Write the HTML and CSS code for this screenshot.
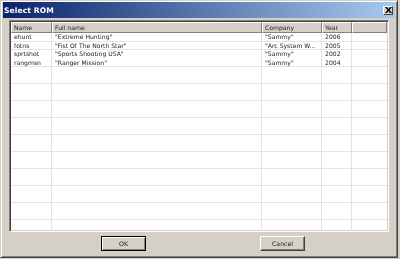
FILE: index.html
```html
<!DOCTYPE html>
<html>
<head>
<meta charset="utf-8">
<link rel="stylesheet" href="styles.css">
</head>
<body>
<div class="window">
  <div class="titlebar">
    <span class="title">Select ROM</span>
    <span class="close">
      <svg width="7" height="6" viewBox="0 0 7 6"><path d="M0 0h2l1.5 2 1.5-2h2l-2.5 3 2.5 3h-2l-1.5-2-1.5 2h-2l2.5-3z" fill="#000"/></svg>
    </span>
  </div>
  <div class="body">
    <div class="list">
      <div class="header">
        <div class="hcell c1">Name</div>
        <div class="hcell c2">Full name</div>
        <div class="hcell c3">Company</div>
        <div class="hcell c4">Year</div>
        <div class="hcell c5"></div>
      </div>
      <div class="rows">
        <div class="row"><div class="cell c1">ehunt</div><div class="cell c2">"Extreme Hunting"</div><div class="cell c3">"Sammy"</div><div class="cell c4">2006</div><div class="cell c5"></div></div>
        <div class="row"><div class="cell c1">fotns</div><div class="cell c2">"Fist Of The North Star"</div><div class="cell c3">"Arc System W...</div><div class="cell c4">2005</div><div class="cell c5"></div></div>
        <div class="row"><div class="cell c1">sprtshot</div><div class="cell c2">"Sports Shooting USA"</div><div class="cell c3">"Sammy"</div><div class="cell c4">2002</div><div class="cell c5"></div></div>
        <div class="row"><div class="cell c1">rangmsn</div><div class="cell c2">"Ranger Mission"</div><div class="cell c3">"Sammy"</div><div class="cell c4">2004</div><div class="cell c5"></div></div>
      </div>
    </div>
    <div class="buttons">
      <button class="btn default">OK</button>
      <button class="btn">Cancel</button>
    </div>
  </div>
</div>
</body>
</html>
```
FILE: styles.css
```css
html, body {
  margin: 0;
  padding: 0;
  background: #d4d0c8;
}
body {
  width: 400px;
  height: 259px;
  overflow: hidden;
  font-family: "DejaVu Sans", "Liberation Sans", sans-serif;
}
.window {
  box-sizing: border-box;
  width: 398px;
  height: 258px;
  border-top: 1px solid #d4d0c8;
  border-left: 1px solid #d4d0c8;
  border-right: 1px solid #404040;
  border-bottom: 1px solid #404040;
  box-shadow: inset 1px 1px 0 #fff, inset -1px -1px 0 #808080;
  padding: 1px 2px 2px 2px;
  display: flex;
  flex-direction: column;
  will-change: transform;
}
.titlebar {
  height: 16px;
  background: linear-gradient(to right, #0a246a, #a6caf0);
  display: flex;
  align-items: center;
  justify-content: space-between;
  padding: 0 2px 0 1px;
}
.title {
  color: #fff;
  font-weight: bold;
  font-size: 7.6px;
  letter-spacing: 0.1px;
}
.close {
  box-sizing: border-box;
  width: 10px;
  height: 9px;
  background: #d4d0c8;
  border-top: 1px solid #fff;
  border-left: 1px solid #fff;
  border-right: 1px solid #404040;
  border-bottom: 1px solid #404040;
  display: flex;
  align-items: center;
  justify-content: center;
}
.close svg { display: block; }
.body {
  flex: 1;
  display: flex;
  flex-direction: column;
  padding: 2px 7px 0 6px;
}
.list {
  box-sizing: border-box;
  width: 380px;
  height: 212px;
  background: #fff;
  border-top: 1px solid #808080;
  border-left: 1px solid #808080;
  border-right: 1px solid #fff;
  border-bottom: 1px solid #fff;
  box-shadow: inset 1px 1px 0 #404040, inset -1px -1px 0 #d4d0c8;
  padding: 1px;
  overflow: hidden;
  font-size: 6.1px;
  color: #1a1a1a;
}
.header {
  display: flex;
  height: 11px;
}
.hcell {
  box-sizing: border-box;
  height: 11px;
  background: #d4d0c8;
  border-top: 1px solid #fff;
  border-left: 1px solid #fff;
  border-right: 1px solid #808080;
  border-bottom: 1px solid #808080;
  padding-left: 2px;
  line-height: 9px;
  color: #1a1a1a;
}
.c1 { width: 41px; }
.c2 { width: 210px; }
.c3 { width: 60px; }
.c4 { width: 30px; }
.c5 { flex: 1; }
.rows {
  height: 200px;
  background-image:
    repeating-linear-gradient(to bottom, transparent 0, transparent 7.5px, #e3e3e3 7.5px, #e3e3e3 8.5px),
    linear-gradient(to right, transparent 40px, #e3e3e3 40px, #e3e3e3 41px, transparent 41px,
      transparent 250px, #e3e3e3 250px, #e3e3e3 251px, transparent 251px,
      transparent 310px, #e3e3e3 310px, #e3e3e3 311px, transparent 311px,
      transparent 340px, #e3e3e3 340px, #e3e3e3 341px, transparent 341px);
}
.row {
  display: flex;
  height: 8.5px;
  line-height: 8px;
}
.cell {
  box-sizing: border-box;
  padding-left: 3px;
  white-space: nowrap;
  overflow: hidden;
}
.buttons {
  display: flex;
  gap: 114px;
  padding-left: 92px;
  margin-top: 4px;
}
.btn {
  box-sizing: border-box;
  width: 45px;
  height: 15px;
  padding: 0;
  margin: 0;
  font-family: "DejaVu Sans", sans-serif;
  font-size: 6.2px;
  color: #1a1a1a;
  background: #d4d0c8;
  border-top: 1px solid #fff;
  border-left: 1px solid #fff;
  border-right: 1px solid #404040;
  border-bottom: 1px solid #404040;
  box-shadow: inset -1px -1px 0 #808080;
}
.btn.default {
  border: 1px solid #000;
  box-shadow: inset 1px 1px 0 #fff, inset -1px -1px 0 #808080;
}
```
